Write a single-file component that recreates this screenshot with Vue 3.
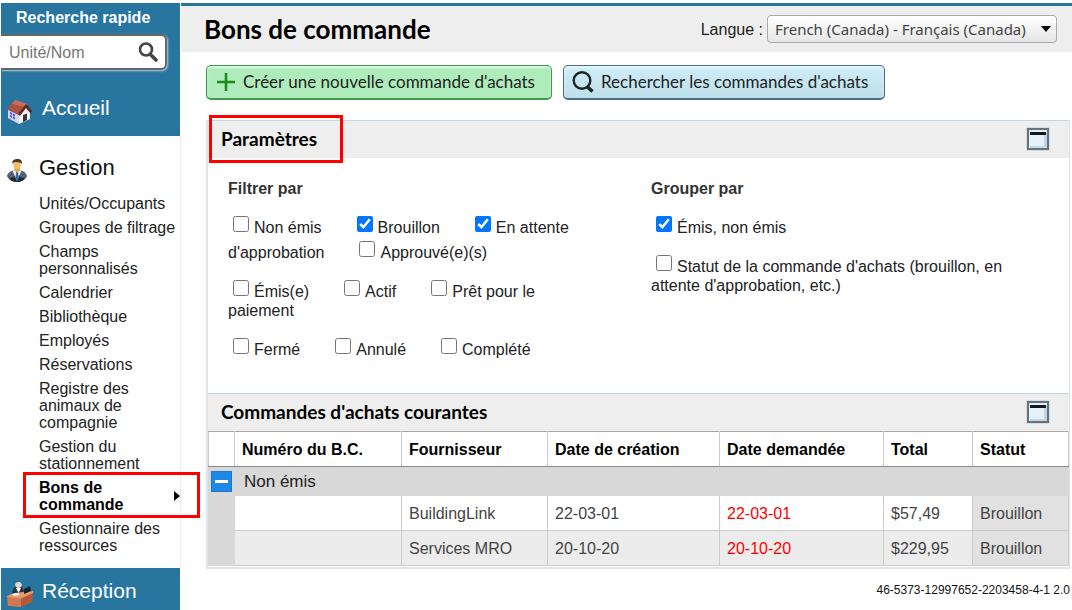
<script setup>
import { ref } from 'vue'

const search = ref('')
const lang = ref('fr-CA')

const links = [
  { text: 'Unités/Occupants' },
  { text: 'Groupes de filtrage' },
  { text: 'Champs personnalisés' },
  { text: 'Calendrier' },
  { text: 'Bibliothèque' },
  { text: 'Employés' },
  { text: 'Réservations' },
  { text: 'Registre des animaux de compagnie' },
  { text: 'Gestion du stationnement' },
  { text: 'Bons de commande', active: true },
  { text: 'Gestionnaire des ressources' },
]

const filters = ref([
  [
    { text: 'Non émis', on: false },
    { text: 'Brouillon', on: true },
    { text: "En attente d'approbation", on: true },
    { text: 'Approuvé(e)(s)', on: false },
  ],
  [
    { text: 'Émis(e)', on: false },
    { text: 'Actif', on: false },
    { text: 'Prêt pour le paiement', on: false },
  ],
  [
    { text: 'Fermé', on: false },
    { text: 'Annulé', on: false },
    { text: 'Complété', on: false },
  ],
])

const groups = ref([
  [{ text: 'Émis, non émis', on: true }],
  [{ text: "Statut de la commande d'achats (brouillon, en attente d'approbation, etc.)", on: false }],
])

const rows = [
  { vendor: 'BuildingLink', created: '22-03-01', due: '22-03-01', total: '$57,49', status: 'Brouillon' },
  { vendor: 'Services MRO', created: '20-10-20', due: '20-10-20', total: '$229,95', status: 'Brouillon' },
]
</script>

<template>
  <div class="page">
    <aside class="sidebar">
      <div class="side-top">
        <label class="quick" for="quick-search">Recherche rapide</label>
        <div class="search">
          <input id="quick-search" v-model="search" type="text" placeholder="Unité/Nom" />
          <button type="button" aria-label="Rechercher">
            <svg width="22" height="22" viewBox="0 0 22 22">
              <circle cx="9" cy="8.500" r="6" fill="none" stroke="#444" stroke-width="2.600" />
              <path d="M13.500 13.500 L19 19" stroke="#444" stroke-width="3.600" stroke-linecap="round" />
            </svg>
          </button>
        </div>
        <a class="section" href="#">
          <svg width="27" height="28" viewBox="0 0 27 28">
            <path d="M1 14 L12 19 L12 28 L1 22 Z" fill="#d6d6ea" />
            <path d="M12 19 L19 11 L23 16 L23 23 L12 28 Z" fill="#f4f2f0" />
            <path d="M8 4 L20 8 L12 19 L0 13 Z" fill="#b0503f" />
            <path d="M8 4 L20 8 L18 11 L5 8 Z" fill="#c96e5a" />
            <path d="M19 8 L25 15 L24 18 L19 12 L13 20 L11 18 Z" fill="#5d2a25" />
            <path d="M3 16 L8 18.500 L8 23.500 L3 21 Z" fill="#4a50d8" />
            <path d="M5.500 17 V23 M3 18.500 L8 21" stroke="#c8caf5" stroke-width="1" />
            <path d="M16 19 L20 17.500 L20 24 L16 26 Z" fill="#3f3432" />
          </svg>
          <span>Accueil</span>
        </a>
      </div>

      <div class="side-menu">
        <a class="section dark" href="#">
          <svg width="21" height="26" viewBox="0 0 21 26">
            <path d="M0 19 C1 15 5 13 10 13 C15 13 19 15 20 19 C19 22 15 25 10 25 C5 25 1 22 0 19 Z" fill="#52616e" />
            <path d="M2 21 C3 23 6 25 10 25 C14 25 17 23 18 21 C15 22 13 19 10 19 C7 19 5 22 2 21 Z" fill="#202932" />
            <path d="M5.500 13.500 L10 24 L14.500 13.500 Z" fill="#f4f4f4" />
            <path d="M9 15 H11 L12 21 L10 24 L8.500 21 Z" fill="#2c6fb4" />
            <path d="M7.500 10 H13 V13 L10.200 16 L7.500 13 Z" fill="#e0a046" />
            <ellipse cx="10.200" cy="7.500" rx="3.800" ry="4.800" fill="#f3bd6c" />
            <path d="M5.500 7 C4.500 3 8 2 10.500 2 C13.500 2 15.500 3.500 15 7 C14 5 12 5.500 9 5 C7 5 6.500 5.500 5.500 7 Z" fill="#4f3522" />
          </svg>
          <span>Gestion</span>
        </a>
        <ul>
          <li v-for="l in links" :key="l.text" :class="{ active: l.active }">
            <a href="#">{{ l.text }}</a>
            <svg v-if="l.active" class="caret" width="6" height="10" viewBox="0 0 6 10"><path d="M0 0 L6 5 L0 10 Z" /></svg>
          </li>
        </ul>
      </div>

      <div class="side-bottom">
        <a class="section" href="#">
          <svg width="27" height="28" viewBox="0 0 27 28">
            <path d="M5 16 C5 10 8 7 12 7 C15 7 17 10 17 16 Z" fill="#26323c" />
            <path d="M9 9 L11.500 14 L14 9 Z" fill="#fff" />
            <circle cx="11.500" cy="6" r="3" fill="#ead9c8" />
            <path d="M8 7 C7.500 2 15.500 2 15 7 C13.500 5 9.500 5 8 7 Z" fill="#d5dade" />
            <path d="M0 17 L7 14 L26 12 L26 15 L14 20 L0 19 Z" fill="#e39a72" />
            <path d="M0 18 L14 19.500 L14 28 L1 27 Z" fill="#d07850" />
            <path d="M14 19.500 L26 14 L25 23 L14 28 Z" fill="#b35a36" />
            <path d="M17 10 L23 7 L24 12 L17 15 Z" fill="#1c2227" />
            <path d="M5 15 L11 14 L13 16 L7 17 Z" fill="#f3f3f3" />
          </svg>
          <span>Réception</span>
        </a>
      </div>
    </aside>

    <main>
      <header class="top">
        <h1>Bons de commande</h1>
        <div class="lang">
          <label for="lang">Langue :</label>
          <div class="select">
            <select id="lang" v-model="lang">
              <option value="fr-CA">French (Canada) - Français (Canada)</option>
            </select>
            <svg width="10" height="6" viewBox="0 0 10 6"><path d="M0 0 H10 L5 6 Z" /></svg>
          </div>
        </div>
      </header>

      <div class="content">
        <div class="actions">
          <button class="btn green" type="button">
            <svg width="20" height="20" viewBox="0 0 20 20"><path d="M10 1 V19 M1 10 H19" stroke="#1c8a1c" stroke-width="2.600" /></svg>
            Créer une nouvelle commande d'achats
          </button>
          <button class="btn blue" type="button">
            <svg width="22" height="24" viewBox="0 0 22 24">
              <circle cx="10" cy="10.500" r="8.300" fill="none" stroke="#1d2428" stroke-width="2.400" />
              <path d="M14.500 16 L20.500 21.500" stroke="#1d2428" stroke-width="3.600" />
            </svg>
            Rechercher les commandes d'achats
          </button>
        </div>

        <div class="panel">
          <section>
            <div class="bar">
              <h2 class="marked">Paramètres</h2>
              <button class="fold" type="button" aria-label="Réduire Paramètres">
                <svg width="24" height="24" viewBox="0 0 24 24">
                  <rect x="0.500" y="0.500" width="23" height="23" fill="#b5cbd8" />
                  <rect x="2" y="2" width="20" height="20" fill="#e4f0fa" stroke="#66737d" stroke-width="2" />
                  <path d="M21 6 V21 H4 V19 H18 V6 Z" fill="#bfd6e8" />
                  <rect x="4" y="5" width="16" height="3" fill="#15191c" />
                </svg>
              </button>
            </div>
            <div class="params">
              <fieldset class="by-filter">
                <legend>Filtrer par</legend>
                <p v-for="(line, i) in filters" :key="i">
                  <label v-for="f in line" :key="f.text"><input v-model="f.on" type="checkbox" />{{ f.text }}</label>
                </p>
              </fieldset>
              <fieldset class="by-group">
                <legend>Grouper par</legend>
                <p v-for="(line, i) in groups" :key="i">
                  <label v-for="f in line" :key="f.text"><input v-model="f.on" type="checkbox" />{{ f.text }}</label>
                </p>
              </fieldset>
            </div>
          </section>

          <section>
            <div class="bar">
              <h2>Commandes d'achats courantes</h2>
              <button class="fold" type="button" aria-label="Réduire Commandes d'achats courantes">
                <svg width="24" height="24" viewBox="0 0 24 24">
                  <rect x="0.500" y="0.500" width="23" height="23" fill="#b5cbd8" />
                  <rect x="2" y="2" width="20" height="20" fill="#e4f0fa" stroke="#66737d" stroke-width="2" />
                  <path d="M21 6 V21 H4 V19 H18 V6 Z" fill="#bfd6e8" />
                  <rect x="4" y="5" width="16" height="3" fill="#15191c" />
                </svg>
              </button>
            </div>
            <table>
              <colgroup>
                <col class="c0" /><col class="c1" /><col class="c2" /><col class="c3" /><col class="c4" /><col class="c5" /><col class="c6" />
              </colgroup>
              <thead>
                <tr>
                  <th></th>
                  <th>Numéro du B.C.</th>
                  <th>Fournisseur</th>
                  <th>Date de création</th>
                  <th>Date demandée</th>
                  <th>Total</th>
                  <th>Statut</th>
                </tr>
              </thead>
              <tbody>
                <tr class="group">
                  <td class="gutter">
                    <button type="button" aria-label="Réduire le groupe">
                      <svg width="13" height="3" viewBox="0 0 13 3"><rect width="13" height="3" fill="#fff" /></svg>
                    </button>
                  </td>
                  <td class="group-name" colspan="6">Non émis</td>
                </tr>
                <tr v-for="r in rows" :key="r.vendor" class="item">
                  <td class="gutter"></td>
                  <td></td>
                  <td>{{ r.vendor }}</td>
                  <td>{{ r.created }}</td>
                  <td class="late">{{ r.due }}</td>
                  <td>{{ r.total }}</td>
                  <td class="status">{{ r.status }}</td>
                </tr>
              </tbody>
            </table>
          </section>
        </div>
        <footer>46-5373-12997652-2203458-4-1 2.0</footer>
      </div>
    </main>
  </div>
</template>

<style>
body {
  background: #fff;
}
</style>

<style scoped>
.page {
  display: flex;
  min-height: 100vh;
  box-sizing: border-box;
  padding-top: 3px;
  font: 16px/19px "Liberation Sans", Arial, sans-serif;
  color: #222;
}
.page * {
  box-sizing: border-box;
}
.page button {
  padding: 0;
  border: 0;
  background: none;
  font: inherit;
}
.page svg {
  display: block;
  flex: none;
}
a {
  color: inherit;
  text-decoration: none;
}

/* Sidebar */
.sidebar {
  display: flex;
  flex-direction: column;
  flex: none;
  width: 181px;
  padding-left: 1px;
}
.side-top,
.side-bottom {
  margin-right: 1px;
  background: #28769f;
  color: #fff;
}
.side-top {
  height: 133px;
}
.quick {
  display: block;
  padding: 5px 0 7px 15px;
  font-weight: bold;
}
.search {
  display: flex;
  align-items: center;
  width: 166px;
  height: 36px;
  padding-right: 6px;
  border: 2px solid #666;
  border-left: 0;
  border-radius: 0 6px 6px 0;
  background: #fff;
  box-shadow: 1px 1px 2px #b8d0de;
}
.search input {
  flex: 1;
  min-width: 0;
  padding: 0 0 0 8px;
  border: 0;
  outline: 0;
  background: none;
  font: inherit;
}
.search input::placeholder {
  color: #757575;
}
.section {
  display: flex;
  align-items: center;
  gap: 8px;
  padding-left: 6px;
  font-size: 21px;
  line-height: 28px;
}
.side-top .section {
  margin-top: 26px;
}
.side-bottom {
  flex: 1;
  padding-top: 11px;
}
.section span {
  margin-top: -4px;
}
.dark {
  gap: 11px;
  font-size: 22px;
  color: #111;
}
.side-menu {
  padding: 21px 0 7px;
  border-right: 1px dotted #ddd;
}
.side-menu ul {
  margin: 12px 0 0;
  padding: 0 0 0 38px;
  list-style: none;
}
.side-menu li {
  position: relative;
  margin-bottom: 7px;
  line-height: 17px;
}
.active {
  padding-right: 30px;
  font-weight: bold;
  color: #000;
}
.active::after {
  content: "";
  position: absolute;
  inset: -7px -20px -5px -16px;
  border: 3px solid #f00;
}
.caret {
  position: absolute;
  right: 0;
  top: 12px;
}

/* Header */
main {
  flex: 1;
  min-width: 0;
  border-top: 3px solid #28769f;
}
.top {
  display: flex;
  align-items: center;
  justify-content: space-between;
  height: 46px;
  padding: 0 15px 0 23px;
  background: #eee;
}
h1,
h2 {
  margin: 0;
  font-family: Lato, sans-serif;
  font-weight: bold;
  color: #000;
}
h1 {
  font-size: 26px;
  line-height: 32px;
}
.lang {
  display: flex;
  align-items: center;
  gap: 4px;
}
.select {
  position: relative;
}
.select select {
  width: 290px;
  height: 28px;
  padding: 0 7px;
  appearance: none;
  border: 1px solid #aaa;
  border-radius: 4px;
  background: linear-gradient(#fff, #e6e6e6);
  font: 15px "Noto Sans", sans-serif;
  color: #444;
}
.select svg {
  position: absolute;
  right: 6px;
  top: 11px;
  pointer-events: none;
}

/* Content */
.content {
  padding: 13px 2px 0 25px;
}
.actions {
  display: flex;
  gap: 11px;
}
.actions .btn {
  display: flex;
  align-items: center;
  height: 35px;
  border: 1px solid;
  border-bottom-width: 2px;
  border-radius: 5px;
  font: 17px/20px Lato, sans-serif;
  color: #222;
}
.actions .green {
  gap: 7px;
  padding: 0 16px 0 9px;
  border-color: #3f9a4c;
  background: #aeecbb;
  box-shadow: inset 0 2px 2px #dcf8e2;
}
.actions .blue {
  gap: 7px;
  padding: 0 16px 0 8px;
  border-color: #4a6c8c;
  background: linear-gradient(#cdeef8, #bfe0ea);
  box-shadow: inset 0 2px 2px #e6f7fc;
}
.panel {
  margin-top: 20px;
  border: solid #dfe4e8;
  border-width: 0 1px 2px 2px;
  padding-bottom: 1px;
}
.bar {
  display: flex;
  align-items: center;
  justify-content: space-between;
  height: 38px;
  padding: 0 19px 2px 13px;
  border-top: 1px solid #c5d5e2;
  background: #eee;
}
h2 {
  position: relative;
  font-size: 19px;
  line-height: 24px;
}
.marked::after {
  content: "";
  position: absolute;
  inset: -12px -26px -12px -12px;
  border: 3px solid #f00;
}
.params {
  display: flex;
  min-height: 235px;
  padding: 21px 20px 0;
}
fieldset {
  margin: 0;
  padding: 0;
  border: 0;
  min-width: 0;
}
.by-filter {
  flex: none;
  width: 423px;
  padding-right: 60px;
}
.by-group {
  flex: 1;
  padding-right: 20px;
}
legend {
  padding: 0;
  font-weight: bold;
  color: #333;
}
fieldset p {
  margin: 14px 0 0;
}
fieldset label {
  margin-right: 30px;
}
fieldset input {
  width: 16px;
  height: 16px;
  margin: 4px 5px 2px;
  vertical-align: 1px;
}

/* Orders */
table {
  width: 100%;
  table-layout: fixed;
  border-collapse: collapse;
}
.c0 { width: 26px; }
.c1 { width: 167px; }
.c2 { width: 146px; }
.c3 { width: 172px; }
.c4 { width: 164px; }
.c5 { width: 89px; }
.c6 { width: 96px; }
th,
td {
  padding: 0 7px;
  border: 1px solid #ccc;
  text-align: left;
}
th {
  height: 35px;
  border-top-color: #aaa;
  border-bottom-color: #888;
  color: #000;
}
.item td {
  height: 35px;
  color: #444;
}
.item:nth-child(odd) td {
  background: #ececec;
}
.item .late {
  color: #f00;
}
.item .status,
.item:nth-child(odd) .status {
  background: #e1e1e1;
}
.group td,
.item td.gutter,
.item:nth-child(odd) td.gutter {
  border-color: #d8d8d8;
  background: #d8d8d8;
}
.group td {
  height: 29px;
  padding: 0 2px;
}
.group .group-name {
  padding: 0 9px;
  font-size: 17px;
}
.page .group button {
  display: flex;
  align-items: center;
  justify-content: center;
  width: 21px;
  height: 21px;
  border: 1px solid #1976d2;
  background: #1e88e5;
}
footer {
  margin-top: 12px;
  text-align: right;
  font-size: 12px;
  line-height: 18px;
  color: #111;
}
</style>
